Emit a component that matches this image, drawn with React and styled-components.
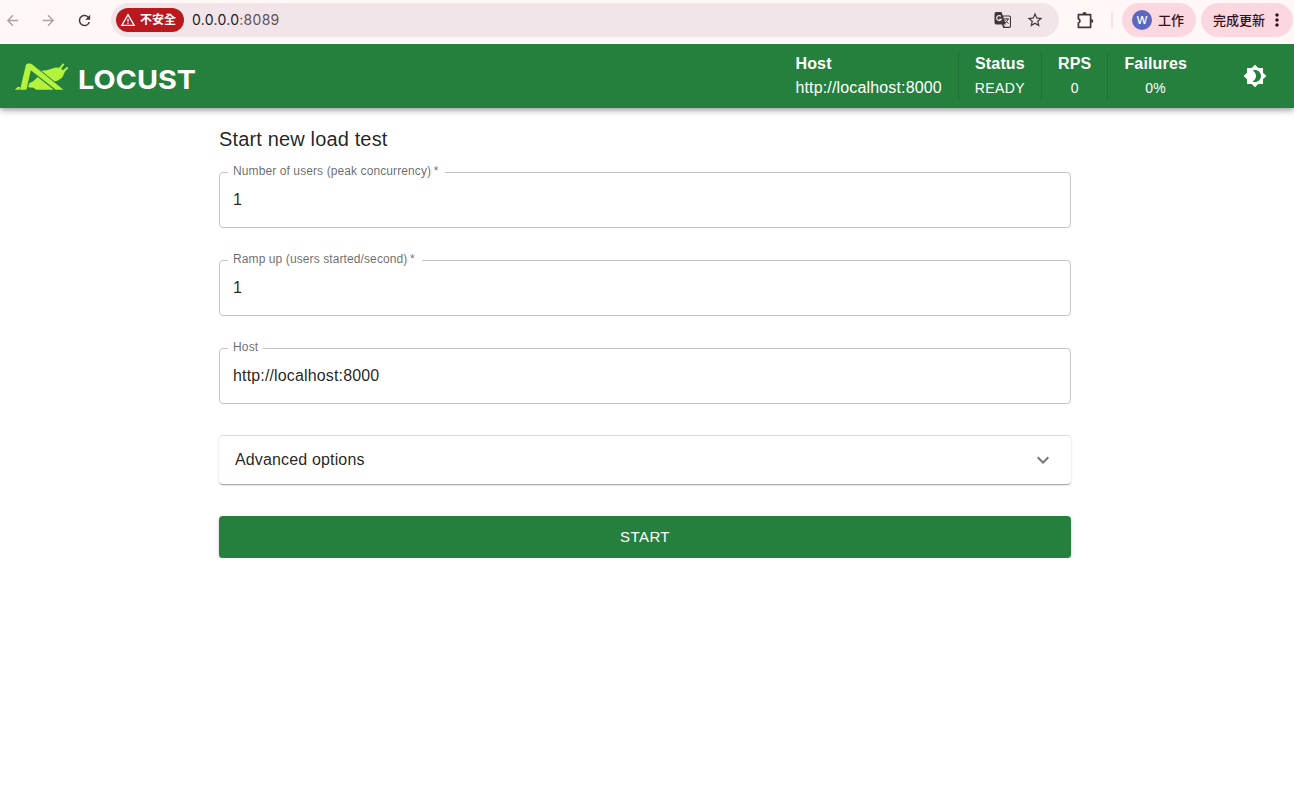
import { useState } from 'react';
import styled, { createGlobalStyle } from 'styled-components';
import {
  MdArrowBack,
  MdArrowForward,
  MdBrightness4,
  MdExpandMore,
  MdMoreVert,
  MdRefresh,
  MdStarBorder,
  MdWarningAmber,
} from 'react-icons/md';

const GlobalStyle = createGlobalStyle`
  * {
    box-sizing: border-box;
  }

  body {
    margin: 0;
    background: #fff;
    color: rgba(0, 0, 0, 0.87);
    font-family: 'Liberation Sans', Helvetica, Arial, sans-serif;
    font-size: 16px;
    line-height: 24px;
    letter-spacing: 0.15px;
  }
`;

const BrowserBar = styled.div`
  position: relative;
  z-index: 1;
  display: flex;
  align-items: center;
  height: 44px;
  padding-bottom: 4px;
  background: #fff8f6;
  color: #42363a;
  font-family: Inter, 'Noto Sans CJK TC', sans-serif;
  letter-spacing: 0;

  svg {
    display: block;
    flex: none;
  }
`;

const NavButtons = styled.div`
  display: flex;
  flex: none;
  align-items: center;
  gap: 19px;
  width: 111px;
  padding-left: 4px;
`;

const NavButton = styled.span`
  color: ${({ $disabled }) => ($disabled ? '#aaa3a2' : '#42363a')};
`;

const AddressBar = styled.div`
  display: flex;
  flex: none;
  align-items: center;
  width: 948px;
  height: 34px;
  padding: 0 15px 0 5px;
  border-radius: 17px;
  background: #f1e5e9;
`;

const Unsafe = styled.span`
  display: flex;
  align-items: center;
  gap: 4px;
  width: 68px;
  height: 24px;
  padding-left: 4px;
  border-radius: 12px;
  background: #b9181d;
  color: #fff;
  font-size: 12px;
  font-weight: 700;
  white-space: nowrap;
`;

const Url = styled.span`
  flex: 1;
  margin-left: 8px;
  font-size: 14px;
  letter-spacing: 0.28px;
  color: #605257;

  b {
    font-weight: 400;
    color: #241a1d;
  }
`;

const AddressActions = styled.div`
  display: flex;
  align-items: center;
  gap: 14px;
`;

const Extensions = styled.span`
  flex: none;
  margin-left: 17px;
`;

const BarDivider = styled.span`
  flex: none;
  width: 2px;
  height: 16px;
  margin: 0 9px 0 16px;
  background: #fbdfe3;
`;

const Pill = styled.div`
  display: flex;
  flex: none;
  align-items: center;
  gap: ${({ $gap }) => $gap}px;
  width: ${({ $width }) => $width}px;
  height: 34px;
  margin-right: 5px;
  padding-left: ${({ $pad }) => $pad}px;
  border-radius: 17px;
  background: #fbd8df;
  color: #35101a;
  font-size: 13px;
  font-weight: 500;
  white-space: nowrap;

  &:last-child {
    margin-right: 0;
  }
`;

const Avatar = styled.span`
  width: 20px;
  height: 20px;
  border-radius: 50%;
  background: #5b68c0;
  color: #fff;
  font-size: 11px;
  line-height: 20px;
  text-align: center;
`;

const AppBar = styled.header`
  display: flex;
  align-items: center;
  justify-content: space-between;
  height: 64px;
  padding: 0 27px 0 14px;
  background: #26803d;
  color: #fff;
  box-shadow: 0 2px 4px -1px rgba(0, 0, 0, 0.2), 0 4px 5px rgba(0, 0, 0, 0.14),
    0 1px 10px rgba(0, 0, 0, 0.12);

  svg {
    display: block;
  }
`;

const LogoText = styled.text`
  fill: #fff;
  font-family: Inter, sans-serif;
  font-size: 26px;
  font-weight: 700;
  letter-spacing: 0;
`;

const HeaderRight = styled.div`
  display: flex;
  align-items: center;
  gap: 40px;
`;

const Stats = styled.div`
  display: flex;
`;

const Stat = styled.div`
  display: flex;
  flex-direction: column;
  align-items: ${({ $align }) => $align || 'center'};
  height: 49px;
  padding: 0 16px;
  border-right: 1px solid rgba(0, 0, 0, 0.12);

  &:last-child {
    border-right: 0;
  }
`;

const StatValue = styled.span`
  font-size: ${({ $small }) => ($small ? 14 : 16)}px;
  letter-spacing: ${({ $small }) => ($small ? 0.4 : 0.15)}px;
`;

const Main = styled.main`
  width: 852px;
  margin: 19px 0 0 219px;
`;

const Title = styled.h2`
  margin: 0 0 16px;
  font-size: 20px;
  font-weight: 400;
  line-height: 24px;
`;

const Form = styled.form`
  display: flex;
  flex-direction: column;
`;

const Field = styled.fieldset`
  height: 61px;
  min-width: 0;
  margin: 0 0 27px;
  padding: 0 13px;
  border: 1px solid #c4c4c4;
  border-radius: 4px;
`;

const Legend = styled.legend`
  height: 10px;
  margin-left: -5px;
  padding: 0 ${({ $required }) => ($required ? 7 : 5)}px 0 5px;
  color: rgba(0, 0, 0, 0.6);
  font-size: 12px;
  line-height: 8px;
  letter-spacing: ${({ $required }) => ($required ? 0.1 : 0.15)}px;
`;

const Input = styled.input`
  display: block;
  width: 100%;
  height: 24px;
  margin-top: 11px;
  padding: 0;
  border: 0;
  outline: 0;
  background: transparent;
  color: inherit;
  font: inherit;
  letter-spacing: inherit;
`;

const Advanced = styled.div`
  display: flex;
  align-items: center;
  justify-content: space-between;
  height: 48px;
  margin: 5px 0 32px;
  padding: 0 16px;
  border-radius: 4px;
  box-shadow: 0 2px 1px -1px rgba(0, 0, 0, 0.2), 0 1px 1px rgba(0, 0, 0, 0.14),
    0 1px 3px rgba(0, 0, 0, 0.12), 0 -1px 0 rgba(0, 0, 0, 0.12);

  svg {
    display: block;
    color: rgba(0, 0, 0, 0.54);
  }
`;

const StartButton = styled.button`
  height: 42px;
  padding: 0 0 1px;
  border: 0;
  border-radius: 4px;
  background: #26803d;
  color: #fff;
  font-family: inherit;
  font-size: 15px;
  letter-spacing: 0.43px;
  box-shadow: 0 3px 1px -2px rgba(0, 0, 0, 0.2), 0 2px 2px rgba(0, 0, 0, 0.14),
    0 1px 5px rgba(0, 0, 0, 0.12);
`;

const stats = [
  { label: 'Host', value: 'http://localhost:8000', align: 'flex-start' },
  { label: 'Status', value: 'READY', small: true },
  { label: 'RPS', value: '0', small: true },
  { label: 'Failures', value: '0%', small: true },
];

function Logo() {
  return (
    <svg width="190" height="40" viewBox="0 -4 190 40" aria-label="Locust">
      <g fill="#b5f23d">
        <path d="M1 29.8 3.6 27h2.6l-.8 2.8z" />
        <path d="M6 29.8 11.8 5.4Q12.3 3.6 14 3.6h1.6q1.6 0 3 1.2L49.4 29.8h-7.6L16.8 10.2 12.4 29.8z" />
        <path d="M14 27.3 15.4 23q4-.8 8.2-6L39.8 29.8H22.4l-3-2z" />
        <path d="M27 10.6Q33 11 38.4 8.6 42 6.8 45.3 7.8L50.7 12.2 48.8 16.6Q46.2 20.3 40.6 21.5z" />
        <path d="m45 8 4-4.8 1.4 1.2-3.3 4.4 1.9 1.5 4.1-3.5 1.2 1.4-4.3 4.2z" />
      </g>
      <LogoText x="64" y="29" textLength="118" lengthAdjust="spacingAndGlyphs">
        LOCUST
      </LogoText>
    </svg>
  );
}

function TranslateIcon() {
  return (
    <svg width="18" height="18" viewBox="0 0 18 18">
      <path d="M2.2 1h5.3l1.3 3.5h6.5q1.7 0 1.7 1.7v9.1q0 1.7-1.7 1.7H9.2L8 13.5H2.2Q.5 13.5.5 11.8V2.7Q.5 1 2.2 1z" fill="#42363a" />
      <path d="m9.2 5.6 3.4 10.2h2.6q.7 0 .7-.7V6.3q0-.7-.7-.7z" fill="#f1e5e9" />
      <path d="m9.4 13.4 1.6 2.4h2l-1-2.4z" fill="#f1e5e9" />
      <path d="M7 5.3a2.5 2.5 0 1 0 .4 3H5.2" fill="none" stroke="#f1e5e9" strokeWidth="1.2" />
      <path d="M10 8h5M12.5 7v1M14.2 8q-.8 2.5-3.2 4M11.5 9.5l3 3.2" fill="none" stroke="#42363a" />
    </svg>
  );
}

function PuzzleIcon() {
  return (
    <svg width="19" height="19" viewBox="0 0 19 19" fill="#42363a">
      <path
        d="M2.4 3.7h12.2v12.6H2.4v-4.2a2.2 2.2 0 0 0 0-4.2z"
        fill="none"
        stroke="#42363a"
        strokeWidth="1.7"
        strokeLinejoin="round"
      />
      <path d="M6.4 3.2a2.1 2.1 0 0 1 4.2 0zM15.2 7.9a2.1 2.1 0 0 1 0 4.2z" />
    </svg>
  );
}

function Browser() {
  return (
    <BrowserBar>
      <NavButtons>
        <NavButton $disabled><MdArrowBack size={17} /></NavButton>
        <NavButton $disabled><MdArrowForward size={17} /></NavButton>
        <NavButton><MdRefresh size={17} /></NavButton>
      </NavButtons>
      <AddressBar>
        <Unsafe>
          <MdWarningAmber size={16} />
          不安全
        </Unsafe>
        <Url><b>0.0.0.0</b>:8089</Url>
        <AddressActions>
          <TranslateIcon />
          <MdStarBorder size={18} />
        </AddressActions>
      </AddressBar>
      <Extensions><PuzzleIcon /></Extensions>
      <BarDivider />
      <Pill $width={74} $pad={10} $gap={6}>
        <Avatar>W</Avatar>
        工作
      </Pill>
      <Pill $width={92} $pad={12} $gap={2}>
        完成更新
        <MdMoreVert size={20} />
      </Pill>
    </BrowserBar>
  );
}

function TextField({ label, value, required, onChange }) {
  return (
    <Field>
      <Legend $required={required}>{label}{required && '\u2009*'}</Legend>
      <Input aria-label={label} value={value} onChange={(e) => onChange(e.target.value)} />
    </Field>
  );
}

export default function App() {
  const [users, setUsers] = useState('1');
  const [rampUp, setRampUp] = useState('1');
  const [host, setHost] = useState('http://localhost:8000');

  return (
    <>
      <GlobalStyle />
      <Browser />
      <AppBar>
        <Logo />
        <HeaderRight>
          <Stats>
            {stats.map((stat) => (
              <Stat key={stat.label} $align={stat.align}>
                <b>{stat.label}</b>
                <StatValue $small={stat.small}>{stat.value}</StatValue>
              </Stat>
            ))}
          </Stats>
          <MdBrightness4 size={24} />
        </HeaderRight>
      </AppBar>
      <Main>
        <Title>Start new load test</Title>
        <Form onSubmit={(e) => e.preventDefault()}>
          <TextField label="Number of users (peak concurrency)" value={users} onChange={setUsers} required />
          <TextField label="Ramp up (users started/second)" value={rampUp} onChange={setRampUp} required />
          <TextField label="Host" value={host} onChange={setHost} />
          <Advanced>
            Advanced options
            <MdExpandMore size={24} />
          </Advanced>
          <StartButton>START</StartButton>
        </Form>
      </Main>
    </>
  );
}
